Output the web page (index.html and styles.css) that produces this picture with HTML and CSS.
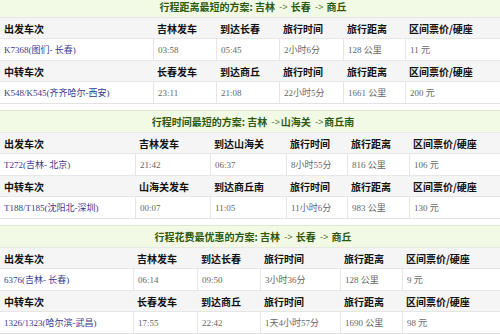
FILE: index.html
```html
<!DOCTYPE html>
<html lang="zh-CN">
<head>
<meta charset="utf-8">
<title>行程方案</title>
<link rel="stylesheet" href="styles.css">
</head>
<body>
<div class="page">
  <section class="plan plan-a">
    <div class="plan-title">行程距离最短的方案: 吉林 <span class="arr">-&gt;</span> 长春 <span class="arr">-&gt;</span> 商丘</div>
    <div class="grid">
      <div class="th">出发车次</div><div class="th">吉林发车</div><div class="th">到达长春</div><div class="th">旅行时间</div><div class="th">旅行距离</div><div class="th">区间票价/硬座</div>
      <div class="td"><a class="train">K7368(图们- 长春)</a></div><div class="td">03:58</div><div class="td">05:45</div><div class="td">2小时6分</div><div class="td">128 公里</div><div class="td">11 元</div>
      <div class="th">中转车次</div><div class="th">长春发车</div><div class="th">到达商丘</div><div class="th">旅行时间</div><div class="th">旅行距离</div><div class="th">区间票价/硬座</div>
      <div class="td"><a class="train">K548/K545(齐齐哈尔-西安)</a></div><div class="td">23:11</div><div class="td">21:08</div><div class="td">22小时5分</div><div class="td">1661 公里</div><div class="td">200 元</div>
    </div>
  </section>
  <section class="plan plan-b">
    <div class="plan-title">行程时间最短的方案: 吉林 <span class="arr">-&gt;</span>山海关 <span class="arr">-&gt;</span>商丘南</div>
    <div class="grid">
      <div class="th">出发车次</div><div class="th">吉林发车</div><div class="th">到达山海关</div><div class="th">旅行时间</div><div class="th">旅行距离</div><div class="th">区间票价/硬座</div>
      <div class="td"><a class="train">T272(吉林- 北京)</a></div><div class="td">21:42</div><div class="td">06:37</div><div class="td">8小时55分</div><div class="td">816 公里</div><div class="td">106 元</div>
      <div class="th">中转车次</div><div class="th">山海关发车</div><div class="th">到达商丘南</div><div class="th">旅行时间</div><div class="th">旅行距离</div><div class="th">区间票价/硬座</div>
      <div class="td"><a class="train">T188/T185(沈阳北-深圳)</a></div><div class="td">00:07</div><div class="td">11:05</div><div class="td">11小时6分</div><div class="td">983 公里</div><div class="td">130 元</div>
    </div>
  </section>
  <section class="plan plan-c">
    <div class="plan-title">行程花费最优惠的方案: 吉林 <span class="arr">-&gt;</span> 长春 <span class="arr">-&gt;</span> 商丘</div>
    <div class="grid">
      <div class="th">出发车次</div><div class="th">吉林发车</div><div class="th">到达长春</div><div class="th">旅行时间</div><div class="th">旅行距离</div><div class="th">区间票价/硬座</div>
      <div class="td"><a class="train">6376(吉林- 长春)</a></div><div class="td">06:14</div><div class="td">09:50</div><div class="td">3小时36分</div><div class="td">128 公里</div><div class="td">9 元</div>
      <div class="th">中转车次</div><div class="th">长春发车</div><div class="th">到达商丘</div><div class="th">旅行时间</div><div class="th">旅行距离</div><div class="th">区间票价/硬座</div>
      <div class="td"><a class="train">1326/1323(哈尔滨-武昌)</a></div><div class="td">17:55</div><div class="td">22:42</div><div class="td">1天4小时57分</div><div class="td">1690 公里</div><div class="td">98 元</div>
    </div>
  </section>
</div>
</body>
</html>
```

FILE: styles.css
```css
html, body {
  margin: 0;
  padding: 0;
  background: #ffffff;
}
body {
  width: 500px;
  height: 334px;
  overflow: hidden;
  font-family: "Noto Sans CJK SC", "Noto Sans", sans-serif;
}
.page {
  margin-top: -5px;
  display: flex;
  flex-direction: column;
  gap: 6px;
}
.plan-c {
  border-bottom: 3px solid #1e1e1e;
}
.plan-title {
  height: 22px;
  box-sizing: border-box;
  border-top: 1px solid #dfe8cf;
  background: #f2f9e4;
  color: #2e5a10;
  font-size: 10px;
  font-weight: 700;
  display: flex;
  align-items: center;
  justify-content: center;
  padding-left: 6px;
  white-space: pre;
}
.arr {
  font-family: "Liberation Sans", sans-serif;
  font-weight: 400;
  font-size: 9px;
  color: #5a7a40;
  margin: 0 1px 0 2px;
}
.grid {
  display: grid;
  grid-template-rows: 21px 22px 21px 22px;
  border-bottom: 1px solid #e2e2e2;
}
.plan-a .grid { grid-template-columns: 153px 63px 63px 64px 62px 1fr; }
.plan-b .grid { grid-template-columns: 135px 75px 76px 61px 62px 1fr; }
.plan-c .grid { grid-template-columns: 133px 64px 63px 80px 62px 1fr; }
.th, .td {
  display: flex;
  align-items: center;
  padding-left: 4px;
  white-space: nowrap;
  overflow: hidden;
}
.th {
  background: #f5f5f5;
  color: #111111;
  font-size: 10px;
  font-weight: 700;
  border-top: 1px solid #e8e8e8;
}
.td {
  background: #ffffff;
  color: #666666;
  font-family: "Liberation Serif", "Noto Sans CJK SC", serif;
  font-size: 9px;
  border-top: 1px solid #e6e6e6;
  border-left: 1px solid #e6e6e6;
}
.td:nth-child(6n+1) {
  border-left: none;
}
.train {
  color: #3a3a8c;
  text-decoration: none;
}
```
